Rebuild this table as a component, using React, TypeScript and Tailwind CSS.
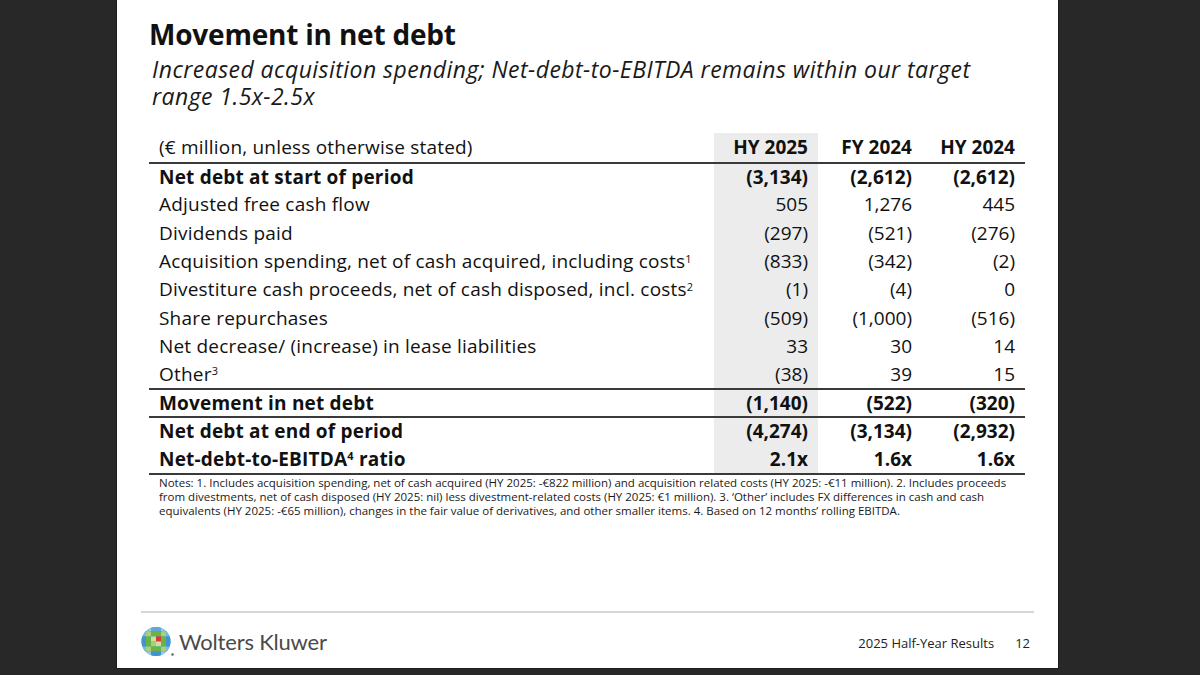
import React from 'react'

interface Row {
    label: React.ReactNode
    values: [string, string, string]
    bold?: boolean
    lineBelow?: boolean
}

const rows: Row[] = [
    {label: 'Net debt at start of period', values: ['(3,134)', '(2,612)', '(2,612)'], bold: true},
    {label: 'Adjusted free cash flow', values: ['505', '1,276', '445']},
    {label: 'Dividends paid', values: ['(297)', '(521)', '(276)']},
    {label: <>Acquisition spending, net of cash acquired, including costs<sup className="text-[11px]">1</sup></>, values: ['(833)', '(342)', '(2)']},
    {label: <>Divestiture cash proceeds, net of cash disposed, incl. costs<sup className="text-[11px]">2</sup></>, values: ['(1)', '(4)', '0']},
    {label: 'Share repurchases', values: ['(509)', '(1,000)', '(516)']},
    {label: 'Net decrease/ (increase) in lease liabilities', values: ['33', '30', '14']},
    {label: <>Other<sup className="text-[11px]">3</sup></>, values: ['(38)', '39', '15'], lineBelow: true},
    {label: 'Movement in net debt', values: ['(1,140)', '(522)', '(320)'], bold: true, lineBelow: true},
    {label: 'Net debt at end of period', values: ['(4,274)', '(3,134)', '(2,932)'], bold: true},
    {label: <>Net-debt-to-EBITDA<sup className="text-[11px]">4</sup> ratio</>, values: ['2.1x', '1.6x', '1.6x'], bold: true, lineBelow: true},
]

function Logo() {
    const cells = [
        ['', '#9cc7e8', '#5fa8dc', '#5fa8dc', '#9cc7e8', ''],
        ['#7bb6e2', '#a6d07a', '#6db33f', '#6db33f', '#a6d07a', '#7bb6e2'],
        ['#3f95d4', '#6db33f', '#c7e2a4', '#e8312f', '#6db33f', '#3f95d4'],
        ['#3f95d4', '#6db33f', '#a6d07a', '#c7e2a4', '#6db33f', '#3f95d4'],
        ['#7bb6e2', '#a6d07a', '#6db33f', '#6db33f', '#a6d07a', '#7bb6e2'],
        ['', '#9cc7e8', '#3f95d4', '#3f95d4', '#9cc7e8', ''],
    ]
    return (
        <svg width="34" height="32" viewBox="0 0 34 32" aria-hidden="true">
            <defs>
                <clipPath id="wk-globe">
                    <circle cx="15" cy="15.5" r="14.5"/>
                </clipPath>
            </defs>
            <g clipPath="url(#wk-globe)">
                <rect x="0" y="0" width="30" height="31" fill="#3f95d4"/>
                {cells.map((r, i) =>
                    r.map((c, j) => c ? <rect key={`${i}-${j}`} x={j * 5} y={0.5 + i * 5} width="5" height="5" fill={c}/> : null)
                )}
            </g>
            <circle cx="31.5" cy="28.5" r="1.3" fill="#666"/>
        </svg>
    )
}

export default function App() {
    return (
        <div className="w-[1200px] h-[675px] bg-[#282828] flex pl-[116px]" style={{fontFamily: '"Open Sans", "Noto Sans", sans-serif'}}>
            <div className="w-[943px] h-[669px] bg-white border-x border-b border-[#1c1c1c] flex flex-col pl-[32px] pr-[34px]">
                <h1 className="mt-[15px] text-[28px] leading-[38px] font-bold text-[#111] tracking-[-0.2px]">Movement in net debt</h1>
                <div className="mt-[3px] ml-[3px] text-[23px] italic text-[#1a1a1a] tracking-[0.45px]">
                    <p className="leading-[27px] h-[27px]">Increased acquisition spending; Net-debt-to-EBITDA remains within our target</p>
                    <p className="leading-[27px] h-[27px]">range 1.5x-2.5x</p>
                </div>

                <table className="mt-[23px] w-[876px] border-collapse text-[19px] text-[#111]">
                    <colgroup>
                        <col className="w-[565px]"/>
                        <col className="w-[104px]"/>
                        <col className="w-[104px]"/>
                        <col className="w-[103px]"/>
                    </colgroup>
                    <thead>
                        <tr className="h-[29px] border-b-2 border-[#3a3a3a]">
                            <th className="pl-[10px] text-left font-normal whitespace-nowrap tracking-[0.2px]">(€ million, unless otherwise stated)</th>
                            <th className="pr-[10px] text-right font-bold bg-[#ececec] whitespace-nowrap">HY 2025</th>
                            <th className="pr-[10px] text-right font-bold whitespace-nowrap">FY 2024</th>
                            <th className="pr-[10px] text-right font-bold whitespace-nowrap">HY 2024</th>
                        </tr>
                    </thead>
                    <tbody>
                        {rows.map((row, i) => (
                            <tr key={i} className={`h-[28.3px] ${row.lineBelow ? 'border-b-2 border-[#3a3a3a]' : ''} ${row.bold ? 'font-bold' : ''}`}>
                                <td className="pl-[10px] whitespace-nowrap leading-none tracking-[0.2px]">{row.label}</td>
                                <td className="pr-[10px] text-right bg-[#ececec] leading-none">{row.values[0]}</td>
                                <td className="pr-[10px] text-right leading-none">{row.values[1]}</td>
                                <td className="pr-[10px] text-right leading-none">{row.values[2]}</td>
                            </tr>
                        ))}
                    </tbody>
                </table>

                <p className="mt-[1px] pl-[10px] text-[11.5px] leading-[14px] text-[#1a1a1a] w-[870px]">
                    Notes: 1. Includes acquisition spending, net of cash acquired (HY 2025: -€822 million) and acquisition related costs (HY 2025: -€11 million). 2. Includes proceeds from divestments, net of cash disposed (HY 2025: nil) less divestment-related costs (HY 2025: €1 million). 3. ‘Other’ includes FX differences in cash and cash equivalents (HY 2025: -€65 million), changes in the fair value of derivatives, and other smaller items. 4. Based on 12 months’ rolling EBITDA.
                </p>

                <div className="mt-auto mb-[10px] -ml-[8px] w-[893px] border-t-2 border-[#d6d6d6] pt-[13px] flex items-center justify-between">
                    <div className="flex items-center gap-[4px]">
                        <Logo/>
                        <span className="text-[22px] leading-none text-[#4a4a4a] tracking-[-0.2px]" style={{fontFamily: '"Lato", "Open Sans", sans-serif'}}>Wolters Kluwer</span>
                    </div>
                    <div className="flex items-center gap-[21px] pr-[4px] pt-[4px] text-[13px] text-[#222]">
                        <span>2025 Half-Year Results</span>
                        <span>12</span>
                    </div>
                </div>
            </div>
        </div>
    )
}
